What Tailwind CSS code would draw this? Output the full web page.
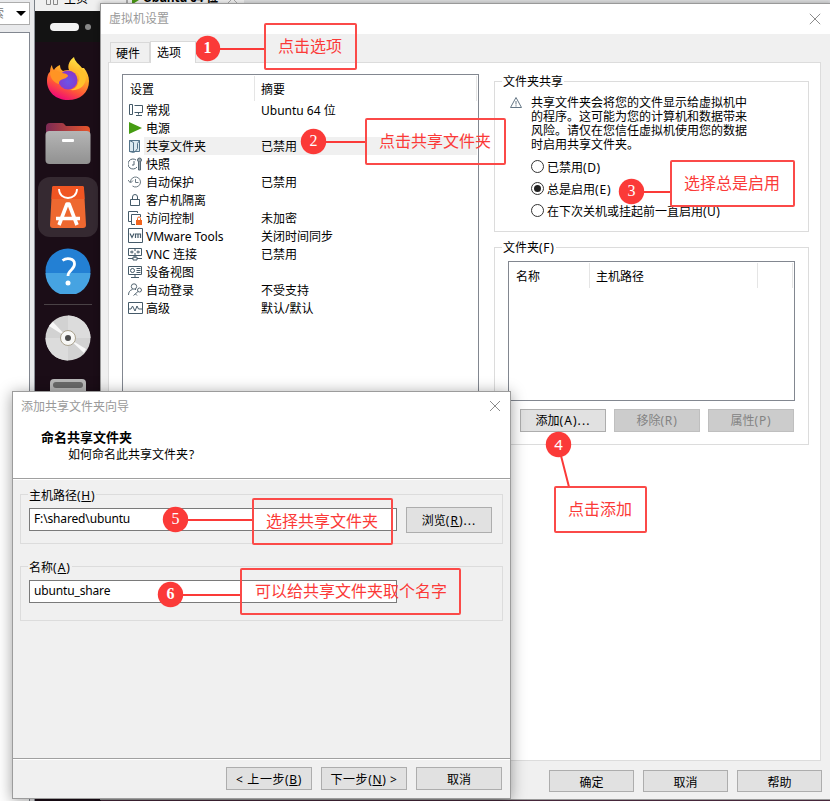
<!DOCTYPE html>
<html lang="zh-CN">
<head>
<meta charset="utf-8">
<title>虚拟机设置</title>
<script src="https://cdn.jsdelivr.net/npm/@tailwindcss/browser@4"></script>
</head>
<body class="relative w-[830px] h-[801px] overflow-hidden bg-white text-black text-[12px] leading-[14px] font-['Noto_Sans','Noto_Sans_CJK_SC',sans-serif]">

<!-- host application behind the dialogs -->
<div class="flex w-[830px] h-[801px]">
  <div class="w-[34px] shrink-0 flex flex-col bg-[#e9eaec]">
    <div class="mt-[2px] h-[23px] w-[30px] bg-white border border-l-0 border-[#adadad] flex items-center justify-between overflow-hidden pr-[3px]">
      <span class="-ml-[8px] text-[#777]">索</span>
      <svg width="10" height="5" viewBox="0 0 10 5"><path d="M0 0h10L5 5z" fill="#000"/></svg>
    </div>
    <div class="mt-[7px] w-[30px] flex-1 bg-white border-t border-r border-[#828790]"></div>
  </div>
  <div class="flex-1 flex flex-col">
    <div class="h-[11px] bg-[#dfe0e2] border-l border-[#7a8087] overflow-hidden flex">
      <div class="w-[75px] bg-[#f0f0f0] flex pl-[11px] gap-[6px]">
        <svg width="12" height="5" viewBox="0 0 12 5" fill="none" stroke="#888"><path d="M.5 0v4.500h4V0M7.500 0v4.500h4V0"/></svg>
        <span class="-mt-[8px]">主页</span>
      </div>
      <div class="w-[134px] bg-[#f4f4f4] flex pl-[16px] gap-[4px]">
        <svg width="13" height="5" viewBox="0 0 13 5"><path d="M1 0v4h3" fill="none" stroke="#666"/><path d="M6 0h7L6 4.500z" fill="#4a9a14"/></svg>
        <span class="-mt-[9px] font-bold whitespace-nowrap tracking-[-.2px]">Ubuntu 64 位</span>
        <svg class="ml-[6px]" width="10" height="4" viewBox="0 0 10 4" fill="none" stroke="#aaa"><path d="M0 3l3-3M6 0l3 3"/></svg>
      </div>
    </div>
    <div class="flex-1 bg-[#512d43] border-l border-[#8d9299]">
      <!-- Ubuntu dock -->
      <div class="w-[66px] h-full bg-[#1b0d17] flex flex-col items-center">
        <div class="h-[31px] w-full bg-[#131313] flex items-center gap-[6px] pl-[15px]">
          <i class="w-[29px] h-[8px] rounded-full bg-[#f3f3f3]"></i><i class="w-[6px] h-[6px] rounded-full bg-[#888]"></i>
        </div>
        <svg class="mt-[14px]" width="44" height="46" viewBox="0 0 44 46">
          <defs>
            <linearGradient id="ff" x1=".8" y1="0" x2=".35" y2="1"><stop offset="0" stop-color="#fff04a"/><stop offset=".4" stop-color="#ffab27"/><stop offset=".72" stop-color="#ff5638"/><stop offset="1" stop-color="#ef0878"/></linearGradient>
            <radialGradient id="fp" cx=".5" cy=".6" r=".6"><stop offset="0" stop-color="#6a55e8"/><stop offset="1" stop-color="#8a35c8"/></radialGradient>
          </defs>
          <path d="M6 9c0 2 1 4 2 5 1-2 3-4 6-5 0 3 1 5 3 6 2-1 4-1 6-1-2-5 1-10 5-13 1 5 5 7 8 11l2 0c3 4 5 8 5 13C43 37 34 44 22 44S1 36 1 25c0-4 1-8 3-9 0-3 1-6 2-7z" fill="url(#ff)"/>
          <circle cx="22" cy="24" r="9.500" fill="url(#fp)"/>
          <path d="M4 16c4-3 8-1 11 1 3 0 7 1 7 3-1 2-5 3-7 4-2 1-2 2-2 4C8 27 4 22 4 16z" fill="#ff9424"/>
          <path d="M28 14c5 3 7 8 4 13-1 4-4 6-8 7 9 1 16-4 16-13 0-4-4-8-8-10 2 2 3 4 3 6-2-2-4-3-7-3z" fill="#ffc22c"/>
        </svg>
        <svg class="mt-[20px]" width="46" height="43" viewBox="0 0 46 43">
          <defs><linearGradient id="fo"><stop stop-color="#7c2a55"/><stop offset="1" stop-color="#e8552a"/></linearGradient><linearGradient id="fg" x2="0" y2="1"><stop stop-color="#b5b5b5"/><stop offset="1" stop-color="#919191"/></linearGradient></defs>
          <path d="M1 30V5q0-4 4-4h12q2 0 3 2l1 1h20q4 0 4 4v22z" fill="url(#fo)"/>
          <rect x=".5" y="9" width="45" height="33" rx="4" fill="url(#fg)"/><rect x="17" y="17" width="12" height="3" rx="1" fill="#fff"/>
        </svg>
        <div class="mt-[12px] w-[60px] h-[60px] rounded-[12px] bg-[#352931] flex items-center justify-center">
          <svg width="38" height="44" viewBox="0 0 38 44"><path d="M5 1h28q2 0 2 3l2 36q0 3-3 3H4q-3 0-3-3L3 4q0-3 2-3z" fill="#ee6830"/><path d="M4.500 1h29q1.500 0 1.500 3l.5 10h-33L3 4q0-3 1.500-3z" fill="#f05522"/><path d="M10 4c0 12 18 12 18 0" fill="none" stroke="#fff" stroke-width="1.800"/><path d="M10 40l8-21h2l8 21M7 33.500h24" fill="none" stroke="#fff" stroke-width="3.600" stroke-linejoin="round"/></svg>
        </div>
        <svg class="mt-[11px]" width="46" height="46" viewBox="0 0 46 46"><circle cx="23" cy="23" r="22.500" fill="#2380d4"/><path d="M.5 25h45a22.500 22.500 0 0 1-45 0z" fill="#46a3e2"/><path d="M17.500 12.500c4-3 12-2.500 12 3.500 0 6-6.500 6-6.500 12" fill="none" stroke="#fff" stroke-width="2.800"/><circle cx="23" cy="35" r="2.500" fill="#fff"/></svg>
        <div class="mt-[10px] w-[48px] h-px bg-[#4a4246]"></div>
        <svg class="mt-[10px]" width="46" height="46" viewBox="0 0 46 46"><circle cx="23" cy="23" r="22.500" fill="#d2d2d2"/><path d="M23 23V.5A22.500 22.500 0 0 1 45.500 23z" fill="#dcdcdc"/><path d="M23 23v22.500A22.500 22.500 0 0 1 .5 23z" fill="#dcdcdc"/><path d="M23 23L4 11l4-4zM23 23l16 15 2-4z" fill="#f8f8f8"/><circle cx="23" cy="23" r="7.500" fill="#f8f8f6" stroke="#aaa28e"/><circle cx="23" cy="23" r="3" fill="#4c4c4c"/></svg>
        <div class="mt-[18px] w-[36px] h-[20px] rounded-[4px] bg-[#b8b8b8] pt-[3px] px-[3px]"><div class="h-[6px] rounded-[3px] bg-[#6a6a6a]"></div></div>
      </div>
    </div>
  </div>
</div>

<!-- settings dialog -->
<section class="absolute left-[100px] top-[3px] w-[732px] h-[797px] bg-[#f0f0f0] border border-[#999] shadow-[0_0_6px_rgba(0,0,0,.3)] flex flex-col">
  <header class="h-[30px] bg-white flex items-center justify-between pl-[8px] pr-[10px] text-[#9a9a9a]">
    <span>虚拟机设置</span>
    <svg width="12" height="12" viewBox="0 0 12 12" fill="none" stroke="#8c8c8c"><path d="M.8.800l10.400 10.400M11.200.800L.8 11.200"/></svg>
  </header>
  <div class="h-[28px] flex items-end pl-[9px]">
    <div class="w-[40px] h-[20px] border border-b-0 border-[#d9d9d9] flex items-center pl-[5px] pt-[3px]">硬件</div>
    <div class="relative z-10 w-[46px] h-[22px] -mb-px bg-white border border-b-0 border-[#d9d9d9] flex items-center pl-[6px]">选项</div>
  </div>
  <main class="ml-[7px] w-[713px] h-[699px] bg-white border border-[#dcdcdc] pt-[11px] pl-[13px] flex items-start">
    <div class="w-[357px] h-[640px] border border-[#828790] px-px pt-px">
      <div class="h-[25px] flex items-stretch">
        <div class="w-[131px] border-r border-[#e5e5e5] pl-[6px] pt-[7px]">设置</div>
        <div class="flex-1 border-r border-[#e5e5e5] pl-[6px] pt-[7px]">摘要</div>
      </div>
      <div class="grid grid-cols-[22px_115px_1fr] auto-rows-[18px] items-center [&>svg]:ml-[4px] [&>span]:pt-px [&>svg]:-mt-px">
        <svg width="17" height="14" viewBox="0 0 17 14" fill="none" stroke="#455a69"><path d="M1.500 1.500h3v10h-3zM6.500 2.500h8v7h-8M10.500 9.500v2M8 12.500h6"/></svg><span>常规</span><span>Ubuntu 64 位</span>
        <svg width="17" height="14" viewBox="0 0 17 14"><path d="M1 1l13 6-13 6z" fill="#459c12"/></svg><span>电源</span><span></span>
        <svg width="17" height="14" viewBox="0 0 17 14" fill="none" stroke="#54748a"><path d="M1.500 1.500h10v11h-10zM1.500 1.500l4 2v10l-4-1zM11.500 1.500l-2 3v5l-3 4" fill="#dce9f0"/></svg><span class="bg-[#f0f0f0] h-[18px] flex items-center -ml-[2px] pl-[2px]">共享文件夹</span><span class="bg-[#f0f0f0] h-[18px] flex items-center">已禁用</span>
        <svg width="17" height="14" viewBox="0 0 17 14" fill="none" stroke="#566773"><path d="M8 3a5 5 0 1 0 1 7M6 4v4H4"/><circle cx="11.500" cy="3" r="2" fill="#9aa5ac"/><path d="M10.500 5v8h2V5" fill="#9aa5ac"/></svg><span>快照</span><span></span>
        <svg width="17" height="14" viewBox="0 0 17 14" fill="none" stroke="#6b7982"><path d="M2.500 7a5 5 0 1 1 2 4M0 5l2.500 3L5 5.500M7.500 4v3.500h3"/></svg><span>自动保护</span><span>已禁用</span>
        <svg width="17" height="14" viewBox="0 0 17 14" fill="none" stroke="#455a69"><path d="M2.500 6.500h9v6h-9zM4.500 6.500V4a2.500 2.500 0 0 1 5 0v2.500"/></svg><span>客户机隔离</span><span></span>
        <svg width="17" height="14" viewBox="0 0 17 14" fill="none" stroke="#455a69"><path d="M3 10.500H.5v-10h9V2M7 13.500H3.500v-10h9V6"/><path d="M8 9h6v5H8z" fill="#f2641c" stroke="none"/><path d="M9.500 9V7.500a1.500 1.500 0 0 1 3 0V9" stroke="#f2641c"/></svg><span>访问控制</span><span>未加密</span>
        <svg width="17" height="16" viewBox="1 0 17 16" fill="none" stroke="#455a69"><path d="M1.500 .5h14v14h-14z"/><path d="M3 5.500l2 4 2-4M8.500 10V6h2.500v4M11 6h2.500v4" stroke-width="1.200"/></svg><span class="tracking-[-.05px]">VMware Tools</span><span>关闭时间同步</span>
        <svg width="17" height="14" viewBox="1 0 17 14" fill="none" stroke="#455a69"><path d="M1.500 1.500h13v7h-13zM8 1v3M8 6v5M3 5h3.500M13 5H9.500M5 3.500v3M11 3.500v3M1 11.500h5M10 11.500h5M6 10h4v3H6z"/></svg><span>VNC 连接</span><span>已禁用</span>
        <svg width="17" height="14" viewBox="1 0 17 14" fill="none" stroke="#455a69"><path d="M1.500 1.500h13v8h-13zM8 9.500V12M4 12.500h8M9.500 3.500h4M9.500 5.500h4M9.500 7.500h4"/><circle cx="5.500" cy="5.500" r="2"/></svg><span>设备视图</span><span></span>
        <svg width="17" height="14" viewBox="1 0 17 14" fill="none" stroke="#566773"><circle cx="7" cy="3.500" r="2.700"/><path d="M1.500 12c0-3 1.500-5 4-5.500M8 6l1 1"/><circle cx="12.500" cy="7" r="2"/><path d="M11 8.500L6.500 12.500M8.500 11l1.500 1.500"/></svg><span>自动登录</span><span>不受支持</span>
        <svg width="17" height="14" viewBox="1 0 17 14" fill="none" stroke="#455a69"><path d="M1.500 1.500h14v11h-14zM1 8h3l1.500-3L8 10l2-5 1.500 3H15"/></svg><span>高级</span><span>默认/默认</span>
      </div>
    </div>
    <div class="ml-[15px] pt-[7px] w-[315px] flex flex-col gap-[15px]">
      <div class="h-[151px] border border-[#dcdcdc] px-[7px]">
        <div class="-mt-[7px] w-max bg-white px-px h-[14px] text-[12px]">文件夹共享</div>
        <div class="mt-[7px] ml-[7px] flex gap-[8px]">
          <svg width="14" height="13" viewBox="0 0 14 13" fill="none" stroke="#647685"><path d="M7 1.500l5.500 10h-11z"/><path d="M7 5v3.500M7 9.300v1.200"/></svg>
          <div class="whitespace-nowrap">共享文件夹会将您的文件显示给虚拟机中<br>的程序。这可能为您的计算机和数据带来<br>风险。请仅在您信任虚拟机使用您的数据<br>时启用共享文件夹。</div>
        </div>
        <div class="mt-[4px] ml-[29px] flex flex-col">
          <div class="h-[22px] flex items-center gap-[3px]"><i class="w-[13px] h-[13px] rounded-full border border-[#333] -mt-px"></i><span class="pt-px">已禁用<span class="tracking-[.6px]">(D)</span></span></div>
          <div class="h-[22px] flex items-center gap-[3px]"><i class="w-[13px] h-[13px] rounded-full border border-[#333] flex items-center justify-center -mt-px"><b class="w-[7px] h-[7px] rounded-full bg-[#222]"></b></i><span class="pt-px">总是启用<span class="tracking-[.9px]">(E)</span></span></div>
          <div class="h-[22px] flex items-center gap-[3px]"><i class="w-[13px] h-[13px] rounded-full border border-[#333] -mt-px"></i><span class="pt-px">在下次关机或挂起前一直启用<span class="tracking-[.4px]">(U)</span></span></div>
        </div>
      </div>
      <div class="h-[198px] border border-[#dcdcdc] pl-[13px]">
        <div class="relative -mt-[7px] -ml-[6px] w-max bg-white px-px h-[14px]">文件夹<span class="tracking-[.7px]">(F)</span></div>
        <div class="mt-[6px] w-[287px] h-[140px] border border-[#828790] p-px">
          <div class="h-[25px] flex [&>div]:border-r [&>div]:border-[#e5e5e5] [&>div]:pt-[7px] [&>div]:pl-[6px]">
            <div class="w-[80px]">名称</div><div class="w-[168px]">主机路径</div><div class="flex-1"></div>
          </div>
        </div>
        <div class="mt-[8px] ml-[12px] flex gap-[8px] [&>div]:w-[86px] [&>div]:h-[23px] [&>div]:border [&>div]:flex [&>div]:items-center [&>div]:justify-center [&>div]:pt-px">
          <div class="bg-[#e1e1e1] border-[#adadad]">添加<span class="tracking-[1.1px]">(A)...</span></div>
          <div class="bg-[#ccc] border-[#bfbfbf] text-[#838383]">移除<span class="tracking-[.8px]">(R)</span></div>
          <div class="bg-[#ccc] border-[#bfbfbf] text-[#838383]">属性<span class="tracking-[.8px]">(P)</span></div>
        </div>
      </div>
    </div>
  </main>
  <footer class="pt-[9px] pl-[448px] flex gap-[9px] [&>div]:w-[85px] [&>div]:h-[22px] [&>div]:pt-[3px] [&>div]:border [&>div]:border-[#adadad] [&>div]:bg-[#e1e1e1] [&>div]:flex [&>div]:items-center [&>div]:justify-center">
    <div>确定</div><div>取消</div><div>帮助</div>
  </footer>
</section>

<!-- add shared folder wizard -->
<section class="absolute left-[12px] top-[391px] w-[499px] h-[408px] bg-[#f0f0f0] border border-[#9c9c9c] shadow-[0_2px_14px_rgba(0,0,0,.38)] flex flex-col">
  <header class="h-[87px] bg-white border-b border-[#a0a0a0] pl-[8px] pr-[9px] pt-[8px]">
    <div class="flex items-center justify-between text-[#999]"><span>添加共享文件夹向导</span>
      <svg class="-mt-[2px]" width="12" height="12" viewBox="0 0 12 12" fill="none" stroke="#8c8c8c"><path d="M1 1l10 10M11 1L1 11"/></svg>
    </div>
    <div class="mt-[16px] ml-[20px] font-bold text-[13px]">命名共享文件夹</div>
    <div class="mt-[4px] ml-[47px]">如何命名此共享文件夹<span class="ml-px">?</span></div>
  </header>
  <div class="h-[280px] border-b border-[#a0a0a0] px-[7px] pt-[14px] border-t border-t-white">
    <div class="h-[50px] border border-[#dcdcdc] px-[8px]">
      <div class="-mt-[6px] -ml-px px-px w-max bg-[#f0f0f0] h-[14px]">主机路径<span class="tracking-[.7px]">(<u>H</u>)</span></div>
      <div class="mt-[4px] flex items-start gap-[9px]">
        <div class="mt-px w-[368px] h-[23px] bg-white border border-[#7a7a7a] pl-[4px] pt-[3px] tracking-[-.15px]">F:\shared\ubuntu</div>
        <div class="w-[86px] h-[26px] bg-[#e1e1e1] border border-[#adadad] flex items-center justify-center pt-px">浏览<span class="tracking-[1px]">(<u>R</u>)...</span></div>
      </div>
    </div>
    <div class="mt-[22px] h-[55px] border border-[#dcdcdc] px-[8px]">
      <div class="-mt-[6px] -ml-px px-px w-max bg-[#f0f0f0] h-[14px]">名称<span class="tracking-[1px]">(<u>A</u>)</span></div>
      <div class="mt-[5px] w-[368px] h-[23px] bg-white border border-[#7a7a7a] pl-[4px] pt-[3px] tracking-[-.15px]">ubuntu_share</div>
    </div>
  </div>
  <footer class="border-t border-white pt-[7px] pl-[213px] flex gap-[9px] [&>div]:w-[86px] [&>div]:h-[23px] [&>div]:pt-[3px] [&>div]:border [&>div]:border-[#adadad] [&>div]:bg-[#e1e1e1] [&>div]:flex [&>div]:items-center [&>div]:justify-center [&>div]:whitespace-pre">
    <div class="tracking-[.6px]">&lt; 上一步(<u>B</u>)</div><div class="tracking-[.6px]">下一步(<u>N</u>) &gt;</div><div>取消</div>
  </footer>
</section>

<!-- numbered callouts -->
<div class="absolute inset-0 text-[16px] leading-[24px] text-[#fb3a38]">
  <svg class="absolute inset-0" width="830" height="801" viewBox="0 0 830 801" fill="none" stroke="#fb3a38" stroke-width="2">
    <path d="M207 49h58M313 142h53M631 192h40M558 444l11 43M175 520h78M170 595h71"/>
    <g fill="#fb3a38" stroke="none"><circle cx="207.500" cy="48.500" r="12.700"/><circle cx="313.500" cy="141.500" r="12.700"/><circle cx="631.500" cy="191.500" r="12.700"/><circle cx="558.500" cy="444.500" r="12.700"/><circle cx="175.500" cy="519.500" r="12.700"/><circle cx="170.500" cy="594.500" r="12.700"/></g>
    <g fill="#fff" stroke="none" text-anchor="middle" font-size="16" font-weight="bold" font-family="Liberation Serif, serif"><text x="207.500" y="53">1</text><text x="313.500" y="146" font-weight="normal">2</text><text x="631.500" y="196" font-weight="normal">3</text><text x="558.500" y="449.500" font-size="15" font-weight="normal" font-family="Noto Sans, sans-serif">4</text><text x="175.500" y="524" font-weight="normal">5</text><text x="170.500" y="599">6</text></g>
  </svg>
  <div class="absolute left-[264px] top-[23px] w-[93px] h-[47px] border-2 border-[#fb4a48] rounded-[2px] pl-[12px] pt-[9px] whitespace-nowrap">点击选项</div>
  <div class="absolute left-[365px] top-[118px] w-[141px] h-[47px] border-2 border-[#fb4a48] rounded-[2px] pl-[12px] pt-[9px] whitespace-nowrap">点击共享文件夹</div>
  <div class="absolute left-[670px] top-[160px] w-[125px] h-[47px] border-2 border-[#fb4a48] rounded-[2px] pl-[12px] pt-[9px] whitespace-nowrap">选择总是启用</div>
  <div class="absolute left-[554px] top-[486px] w-[93px] h-[47px] border-2 border-[#fb4a48] rounded-[2px] pl-[12px] pt-[9px] whitespace-nowrap">点击添加</div>
  <div class="absolute left-[252px] top-[498px] w-[141px] h-[47px] border-2 border-[#fb4a48] rounded-[2px] pl-[12px] pt-[9px] whitespace-nowrap">选择共享文件夹</div>
  <div class="absolute left-[240px] top-[568px] w-[221px] h-[47px] border-2 border-[#fb4a48] rounded-[2px] pl-[13px] pt-[9px] whitespace-nowrap">可以给共享文件夹取个名字</div>
</div>
</body>
</html>
